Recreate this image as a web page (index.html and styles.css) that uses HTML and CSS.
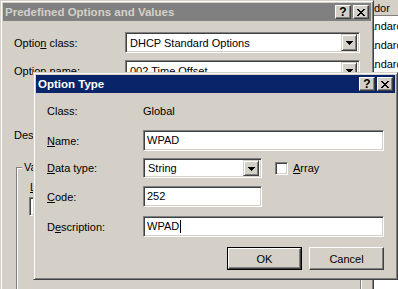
FILE: index.html
```html
<!DOCTYPE html>
<html>
<head>
<meta charset="utf-8">
<title>Option Type</title>
<link rel="stylesheet" href="styles.css">
</head>
<body>
<div class="desktop">

  <div class="listwin">
    <div class="lv-head"><span class="lv-text head-text">Vendor</span></div>
    <div class="lv-row"><span class="lv-text">Standard</span></div>
    <div class="lv-row"><span class="lv-text">Standard</span></div>
    <div class="lv-row"><span class="lv-text">Standard</span></div>
  </div>

  <div class="win back">
    <div class="titlebar inactive">
      <span class="title">Predefined Options and Values</span>
      <div class="tbtns">
        <span class="tbtn help">?</span>
        <span class="tbtn"><svg width="8" height="7" viewBox="0 0 8 7" shape-rendering="crispEdges"><path d="M0 0h2v1h-2zM6 0h2v1h-2zM1 1h2v1h-2zM5 1h2v1h-2zM2 2h4v1h-4zM3 3h2v1h-2zM2 4h4v1h-4zM1 5h2v1h-2zM5 5h2v1h-2zM0 6h2v1h-2zM6 6h2v1h-2z" fill="#000"/></svg></span>
      </div>
    </div>
    <div class="back-body">
      <div class="brow first">
        <span class="blabel">Optio<u>n</u> class:</span>
        <div class="combo bcombo"><span class="ctext">DHCP Standard Options</span><span class="ddbtn"><svg width="7" height="4" viewBox="0 0 7 4" shape-rendering="crispEdges"><path d="M0 0h7v1h-7zM1 1h5v1h-5zM2 2h3v1h-3zM3 3h1v1h-1z" fill="#000"/></svg></span></div>
      </div>
      <div class="brow second">
        <span class="blabel">Option <u>n</u>ame:</span>
        <div class="combo bcombo"><span class="ctext">002 Time Offset</span><span class="ddbtn"><svg width="7" height="4" viewBox="0 0 7 4" shape-rendering="crispEdges"><path d="M0 0h7v1h-7zM1 1h5v1h-5zM2 2h3v1h-3zM3 3h1v1h-1z" fill="#000"/></svg></span></div>
      </div>
      <div class="brow third">
        <span class="blabel clip-desc">Description:</span>
      </div>
      <div class="group">
        <span class="legend">Value</span>
        <div class="glabel"><u>L</u>ong:</div>
        <div class="field gfield"></div>
      </div>
    </div>
  </div>

  <div class="win front">
    <div class="titlebar active">
      <span class="title">Option Type</span>
      <div class="tbtns">
        <span class="tbtn help">?</span>
        <span class="tbtn"><svg width="8" height="7" viewBox="0 0 8 7" shape-rendering="crispEdges"><path d="M0 0h2v1h-2zM6 0h2v1h-2zM1 1h2v1h-2zM5 1h2v1h-2zM2 2h4v1h-4zM3 3h2v1h-2zM2 4h4v1h-4zM1 5h2v1h-2zM5 5h2v1h-2zM0 6h2v1h-2zM6 6h2v1h-2z" fill="#000"/></svg></span>
      </div>
    </div>
    <div class="front-body">
      <div class="row r-class">
        <span class="label">Class:</span>
        <span class="value">Global</span>
      </div>
      <div class="row r-name">
        <span class="label"><u>N</u>ame:</span>
        <div class="field wide"><span class="ftext">WPAD</span></div>
      </div>
      <div class="row r-type">
        <span class="label"><u>D</u>ata type:</span>
        <div class="combo narrow"><span class="ctext">String</span><span class="ddbtn"><svg width="7" height="4" viewBox="0 0 7 4" shape-rendering="crispEdges"><path d="M0 0h7v1h-7zM1 1h5v1h-5zM2 2h3v1h-3zM3 3h1v1h-1z" fill="#000"/></svg></span></div>
        <span class="check"></span>
        <span class="checklabel"><u>A</u>rray</span>
      </div>
      <div class="row r-code">
        <span class="label"><u>C</u>ode:</span>
        <div class="field narrow"><span class="ftext">252</span></div>
      </div>
      <div class="row r-desc">
        <span class="label">D<u>e</u>scription:</span>
        <div class="field wide"><span class="ftext">WPAD</span><span class="caret"></span></div>
      </div>
      <div class="buttons">
        <div class="defbtn"><span class="btn">OK</span></div>
        <span class="btn">Cancel</span>
      </div>
    </div>
  </div>

</div>
</body>
</html>
```
FILE: styles.css
```css
* { box-sizing: border-box; }
html, body { margin: 0; padding: 0; }
body {
  width: 398px;
  height: 289px;
  overflow: hidden;
  background: #d4d0c8;
  font-family: "Liberation Sans", Arial, sans-serif;
  font-size: 11px;
  color: #000;
}
u { text-decoration: underline; text-underline-offset: 1px; }

.desktop {
  position: relative;
  width: 398px;
  height: 289px;
  overflow: hidden;
}

/* list window behind, on the right */
.listwin {
  position: absolute;
  left: 372px;
  top: 0;
  width: 30px;
  height: 289px;
  background: #fff;
  overflow: hidden;
}
.lv-head {
  height: 16px;
  background: #d4d0c8;
  border-bottom: 1px solid #808080;
  display: flex;
  align-items: flex-end;
  padding-bottom: 0;
}
.lv-row {
  height: 19px;
  display: flex;
  align-items: center;
}
.lv-rows-start { margin-top: -1px; }
.lv-text { margin-left: -14px; white-space: nowrap; overflow: hidden; }
.head-text { margin-left: -17px; line-height: 13px; }

/* generic window frame */
.win {
  position: absolute;
  background: #d4d0c8;
  border: 1px solid;
  border-color: #d4d0c8 #404040 #404040 #d4d0c8;
  box-shadow: inset 1px 1px #fff, inset -1px -1px #808080;
  padding: 2px;
  display: flex;
  flex-direction: column;
}
.back { left: 0; top: 0; width: 374px; height: 300px; }
.front { left: 33px; top: 72px; width: 365px; height: 208px; }

.titlebar {
  flex: none;
  height: 18px;
  display: flex;
  align-items: center;
  justify-content: space-between;
  padding: 0 2px 0 2px;
}
.titlebar.inactive { background: #808080; color: #d4d0c8; }
.titlebar.active { background: #0a246a; color: #fff; }
.title { font-weight: bold; font-size: 11.5px; white-space: nowrap; }
.tbtns { display: flex; gap: 2px; }
.tbtn {
  width: 16px;
  height: 14px;
  background: #d4d0c8;
  border: 1px solid;
  border-color: #fff #404040 #404040 #fff;
  box-shadow: inset -1px -1px #808080;
  display: flex;
  align-items: center;
  justify-content: center;
  color: #000;
}
.tbtn.help { font-weight: bold; font-size: 12px; line-height: 12px; }

/* sunken controls */
.field, .combo {
  background: #fff;
  border: 1px solid;
  border-color: #808080 #fff #fff #808080;
  box-shadow: inset 1px 1px #404040, inset -1px -1px #d4d0c8;
  height: 21px;
  display: flex;
  align-items: center;
  padding: 0 2px 1px 3px;
}
.combo { justify-content: space-between; padding: 2px 2px 2px 4px; }
.ddbtn {
  width: 16px;
  height: 17px;
  background: #d4d0c8;
  border: 1px solid;
  border-color: #d4d0c8 #404040 #404040 #d4d0c8;
  box-shadow: inset 1px 1px #fff, inset -1px -1px #808080;
  display: flex;
  align-items: center;
  justify-content: center;
  padding-top: 1px;
}

/* back window body */
.back-body { padding: 11px 0 0 11px; }
.brow { display: flex; align-items: center; height: 21px; }
.brow.second { margin-top: 7px; }
.brow.third { margin-top: 43px; }
.blabel { width: 111px; white-space: nowrap; }
.blabel.clip-desc { width: 19px; overflow: hidden; }
.bcombo { width: 235px; }

.group {
  position: relative;
  margin: 22px 0 0 2px;
  width: 345px;
  height: 150px;
  border: 1px solid #808080;
  box-shadow: inset 1px 1px #fff, 1px 1px #fff;
  padding: 13px 0 0 13px;
}
.legend {
  position: absolute;
  left: 5px;
  top: -7px;
  width: 13px;
  overflow: hidden;
  white-space: nowrap;
  background: #d4d0c8;
  padding: 0 0 0 2px;
  line-height: 13px;
}
.glabel { height: 13px; line-height: 13px; width: 4px; overflow: hidden; white-space: nowrap; }
.gfield { margin: 3px 0 0 -1px; width: 100px; height: 19px; }

/* front dialog body */
.front-body { padding: 7px 11px 0 11px; display: flex; flex-direction: column; }
.row { display: flex; align-items: center; height: 21px; }
.label { width: 96px; white-space: nowrap; }
.r-name { margin-top: 9px; }
.r-type { margin-top: 7px; height: 20px; }
.r-code { margin-top: 8px; }
.r-desc { margin-top: 9px; }
.field.wide { width: 241px; }
.field.narrow { width: 119px; }
.combo.narrow { width: 119px; height: 20px; padding: 1px 2px 1px 4px; }
.combo.narrow .ddbtn { height: 16px; }
.check {
  margin-left: 13px;
  width: 13px;
  height: 13px;
  background: #fff;
  border: 1px solid;
  border-color: #808080 #fff #fff #808080;
  box-shadow: inset 1px 1px #404040, inset -1px -1px #d4d0c8;
}
.checklabel { margin-left: 5px; }
.caret {
  width: 1px;
  height: 13px;
  background: #000;
  margin-left: 1px;
}

.buttons {
  margin-top: 10px;
  display: flex;
  justify-content: flex-end;
  gap: 7px;
}
.btn {
  width: 75px;
  height: 23px;
  background: #d4d0c8;
  border: 1px solid;
  border-color: #fff #404040 #404040 #fff;
  box-shadow: inset -1px -1px #808080, inset 1px 1px #d4d0c8;
  display: flex;
  align-items: center;
  justify-content: center;
}
.defbtn { border: 1px solid #000; display: flex; }
.defbtn .btn { width: 73px; height: 21px; }
```
